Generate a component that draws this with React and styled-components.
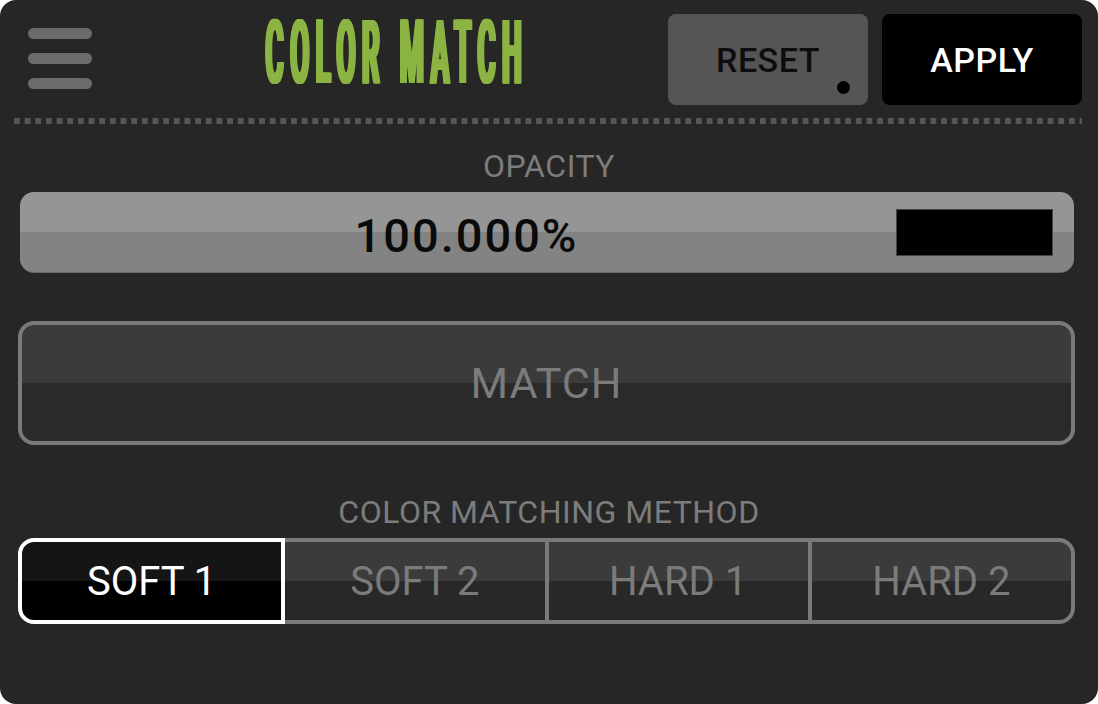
import styled, { createGlobalStyle } from 'styled-components'

const GlobalStyle = createGlobalStyle`
  html, body {
    margin: 0;
    padding: 0;
    background: #ffffff;
  }
  body {
    font-family: Roboto, "Liberation Sans", sans-serif;
  }
`

const Panel = styled.div`
  width: 1098px;
  height: 704px;
  box-sizing: border-box;
  background: #262626;
  border-radius: 16px;
  overflow: hidden;
  display: flex;
  flex-direction: column;
`

const Header = styled.div`
  display: flex;
  align-items: center;
  height: 91px;
  padding: 14px 16px 0 28px;
`

const Menu = styled.div`
  align-self: flex-start;
  display: flex;
  flex-direction: column;
  gap: 14px;
  margin-top: 14px;
`

const MenuBar = styled.span`
  display: block;
  width: 64px;
  height: 11px;
  border-radius: 6px;
  background: #6b6b6b;
`

// condensed display face: squeeze Roboto Bold and thicken the stems with
// horizontal shadows (before the squeeze) so it reads like a narrow poster font
const Title = styled.div`
  align-self: flex-start;
  width: 260px;
  margin: 4px 0 0 172px;
  white-space: nowrap;
  line-height: 70px;

  span {
    display: inline-block;
    font-family: Roboto, "Liberation Sans", sans-serif;
    font-weight: 700;
    font-size: 88.6px;
    letter-spacing: 21px;
    color: #8bb443;
    transform: scaleX(0.312);
    transform-origin: left center;
    text-shadow: 2px 0 #8bb443, 4px 0 #8bb443, 6px 0 #8bb443, 8px 0 #8bb443,
      10px 0 #8bb443;
  }
`

const Actions = styled.div`
  margin-left: auto;
  display: flex;
  gap: 14px;
`

const HeaderButton = styled.button`
  position: relative;
  width: 200px;
  height: 91px;
  border: none;
  border-radius: 8px;
  background: ${(p) => (p.$primary ? '#000000' : '#555555')};
  color: ${(p) => (p.$primary ? '#ffffff' : '#0d0d0d')};
  font-family: Roboto, "Liberation Sans", sans-serif;
  font-weight: 500;
  font-size: 34px;
  letter-spacing: 0.5px;
  padding: 0;
`

const Dot = styled.span`
  position: absolute;
  right: 18px;
  bottom: 11px;
  width: 13px;
  height: 13px;
  border-radius: 50%;
  background: #000;
`

const Divider = styled.div`
  height: 6px;
  margin: 13px 16px 0 14px;
  background-image: linear-gradient(to right, #565656 5.5px, transparent 5.5px);
  background-size: 10.67px 6px;
  background-repeat: repeat-x;
`

const Label = styled.div`
  text-align: center;
  font-size: 32px;
  line-height: 36px;
  letter-spacing: 0.5px;
  color: #7c7c7c;
  margin-top: ${(p) => p.$top}px;
`

const OpacityBar = styled.div`
  display: flex;
  align-items: center;
  height: 81px;
  box-sizing: border-box;
  margin: 8px 24px 0 20px;
  padding: 0 21px 0 17px;
  border-radius: 14px;
  background: linear-gradient(to bottom, #959595 50%, #838383 50%);
  border-bottom: 1px solid #6a6a6a;
`

const Value = styled.div`
  flex: 1;
  text-align: center;
  padding-top: 6px;
  font-size: 47px;
  line-height: 47px;
  font-weight: 500;
  letter-spacing: 2px;
  color: #0a0a0a;
`

const Swatch = styled.div`
  width: 157px;
  height: 47px;
  background: #000;
  border: 1px solid #444;
  box-sizing: border-box;
`

const MatchButton = styled.button`
  display: block;
  height: 124px;
  margin: 48px 23px 0 18px;
  border: 4px solid #7a7a7a;
  border-radius: 16px;
  background: linear-gradient(to bottom, #3b3b3b 50%, #2a2a2a 50%);
  color: #7b7b7b;
  font-family: Roboto, "Liberation Sans", sans-serif;
  font-size: 43px;
  letter-spacing: 1px;
  padding: 0;
`

const Segments = styled.div`
  display: flex;
  height: 86px;
  margin: 8px 23px 0 18px;
`

const Segment = styled.button`
  position: relative;
  z-index: ${(p) => (p.$active ? 1 : 0)};
  flex: 1;
  box-sizing: border-box;
  margin-left: -4px;
  border: 4px solid ${(p) => (p.$active ? '#ffffff' : '#7a7a7a')};
  background: ${(p) =>
    p.$active
      ? 'linear-gradient(to bottom, #151515 50%, #000000 50%)'
      : 'linear-gradient(to bottom, #3b3b3b 50%, #282828 50%)'};
  color: ${(p) => (p.$active ? '#ffffff' : '#7b7b7b')};
  font-family: Roboto, "Liberation Sans", sans-serif;
  font-size: 40px;
  padding: 0;

  &:first-child {
    margin-left: 0;
    border-radius: 16px 0 0 16px;
  }
  &:last-child {
    border-radius: 0 16px 16px 0;
  }
`

const methods = ['SOFT 1', 'SOFT 2', 'HARD 1', 'HARD 2']

const App = () => {
  return (
    <>
      <GlobalStyle />
      <Panel>
        <Header>
          <Menu>
            <MenuBar />
            <MenuBar />
            <MenuBar />
          </Menu>
          <Title>
            <span>COLOR MATCH</span>
          </Title>
          <Actions>
            <HeaderButton>
              RESET
              <Dot />
            </HeaderButton>
            <HeaderButton $primary>APPLY</HeaderButton>
          </Actions>
        </Header>
        <Divider />
        <Label $top={24}>OPACITY</Label>
        <OpacityBar>
          <Value>100.000%</Value>
          <Swatch />
        </OpacityBar>
        <MatchButton>MATCH</MatchButton>
        <Label $top={49}>COLOR MATCHING METHOD</Label>
        <Segments>
          {methods.map((m, i) => (
            <Segment key={m} $active={i === 0}>
              {m}
            </Segment>
          ))}
        </Segments>
      </Panel>
    </>
  )
}

export default App
